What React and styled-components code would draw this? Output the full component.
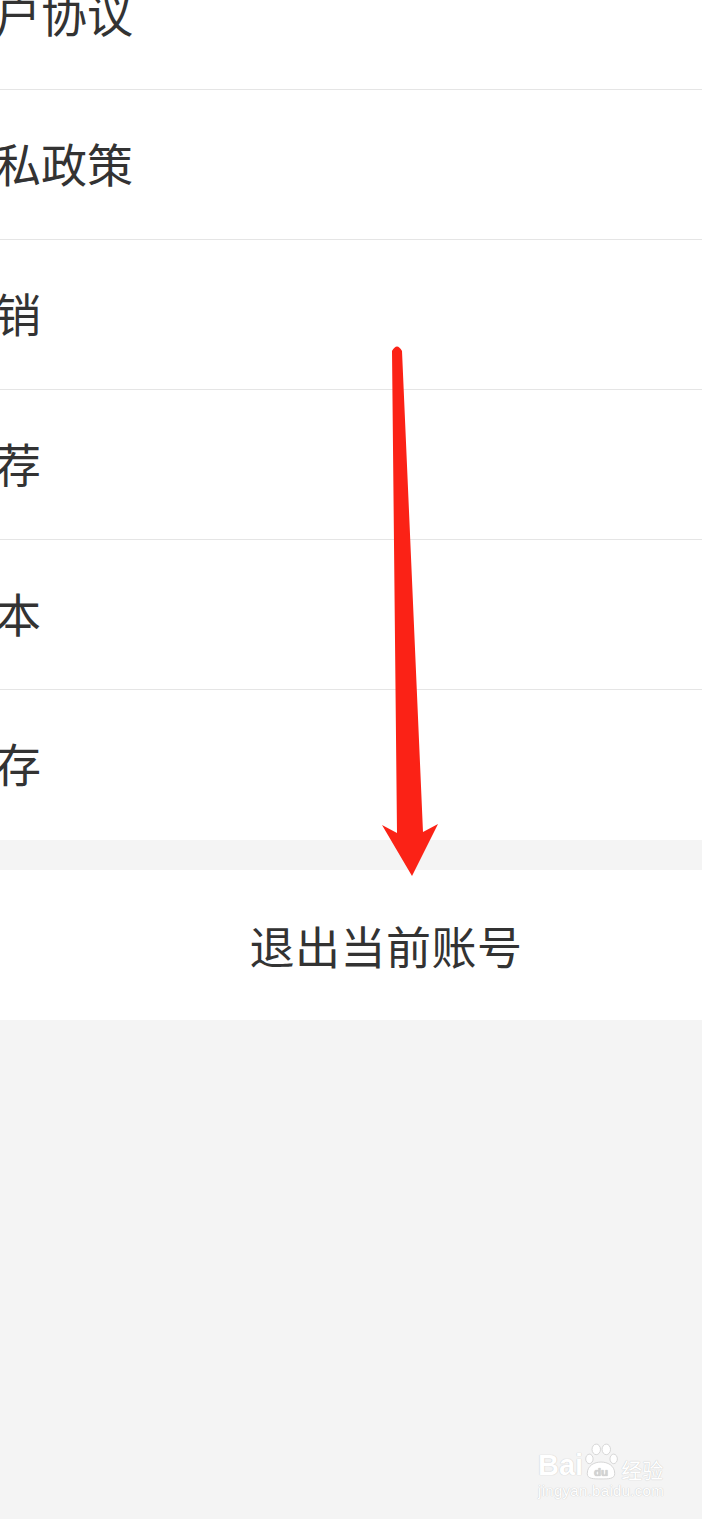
import React from 'react';
import styled, { createGlobalStyle } from 'styled-components';

const GlobalStyle = createGlobalStyle`
  html, body {
    margin: 0;
    padding: 0;
    background: #f4f4f4;
  }
  body {
    font-family: "Noto Sans CJK SC", "Noto Sans", sans-serif;
    overflow: hidden;
  }
`;

const Page = styled.div`
  position: relative;
  width: 702px;
  height: 1519px;
  overflow: hidden;
  background: #f4f4f4;
`;

const List = styled.div`
  background: #fff;
  margin-top: -60px;
`;

const Row = styled.div`
  height: 150px;
  box-sizing: border-box;
  display: flex;
  align-items: center;
  border-bottom: ${(p) => (p.last ? 'none' : '1px solid #e5e5e5')};
`;

const Label = styled.span`
  margin-left: -51px;
  margin-bottom: 6px;
  font-size: 46px;
  line-height: 1;
  color: #333;
  white-space: nowrap;
`;

const Gap = styled.div`
  height: 30px;
`;

const LogoutButton = styled.div`
  height: 150px;
  background: #fff;
  display: flex;
  align-items: center;
  justify-content: center;
  padding-left: 70px;
  font-size: 45px;
  color: #333;
  letter-spacing: 0.5px;
`;

const ArrowLayer = styled.svg`
  position: absolute;
  left: 0;
  top: 0;
  pointer-events: none;
`;

const Watermark = styled.div`
  position: absolute;
  left: 538px;
  top: 1440px;
  display: flex;
  flex-direction: column;
  color: #fff;
  text-shadow: 0 0 1px #c9c9c9, 0 0 1px #d4d4d4;
  font-family: "Liberation Sans", Arial, sans-serif;
`;

const MarkTop = styled.div`
  display: flex;
  align-items: flex-end;
  height: 40px;
`;

const Bai = styled.span`
  font-size: 29px;
  font-weight: bold;
  line-height: 1;
`;

const Jingyan = styled.span`
  font-family: "Noto Sans CJK SC", sans-serif;
  font-size: 21px;
  line-height: 1;
  margin-left: 2px;
`;

const MarkUrl = styled.div`
  font-size: 15px;
  margin-top: 2px;
  letter-spacing: 0.3px;
`;

const rows = ['用户协议', '隐私政策', '注销', '推荐', '版本', '缓存'];

const Paw = () => (
  <svg width="36" height="38" viewBox="0 0 34 36">
    <g fill="#fff" stroke="#cfcfcf" strokeWidth="0.8">
      <ellipse cx="6" cy="16" rx="3.5" ry="4.5" />
      <ellipse cx="12.5" cy="7" rx="4" ry="5" />
      <ellipse cx="22" cy="7" rx="4" ry="5" />
      <ellipse cx="29" cy="16" rx="3.5" ry="4.5" />
      <path d="M4 30 C4 22 11 19 17 19 C23 19 30 22 30 30 C30 35 24 35 17 35 C10 35 4 35 4 30 Z" />
    </g>
    <text x="17" y="32" textAnchor="middle" fontSize="11" fontWeight="bold" fill="#d2d2d2" fontFamily="Liberation Sans, sans-serif">du</text>
  </svg>
);

export default function App() {
  return (
    <Page>
      <GlobalStyle />
      <List>
        {rows.map((r, i) => (
          <Row key={r} last={i === rows.length - 1}>
            <Label>{r}</Label>
          </Row>
        ))}
      </List>
      <Gap />
      <LogoutButton>退出当前账号</LogoutButton>

      <ArrowLayer width="702" height="1519" viewBox="0 0 702 1519">
        <path
          d="M392 351 Q397 342 402 351 L423 832 L438 824 L412 876 L382 825 L397 833 Z"
          fill="#fb2216"
          strokeLinejoin="round"
        />
      </ArrowLayer>

      <Watermark>
        <MarkTop>
          <Bai>Bai</Bai>
          <Paw />
          <Jingyan>经验</Jingyan>
        </MarkTop>
        <MarkUrl>jingyan.baidu.com</MarkUrl>
      </Watermark>
    </Page>
  );
}
